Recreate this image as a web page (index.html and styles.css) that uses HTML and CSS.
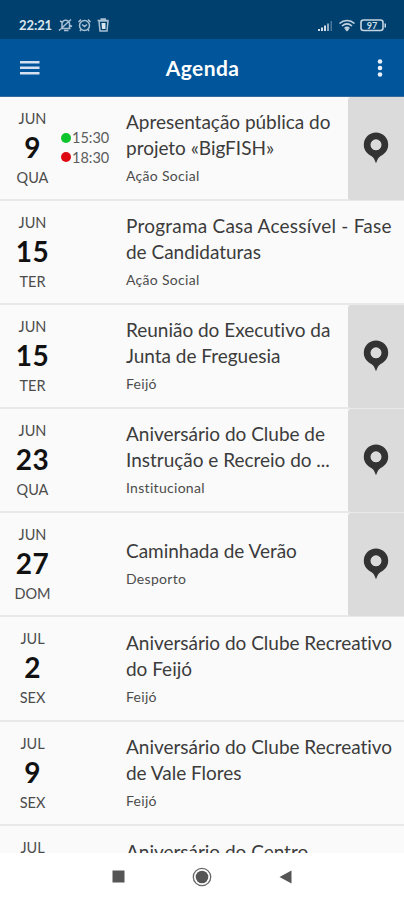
FILE: index.html
```html
<!DOCTYPE html>
<html lang="pt">
<head>
    <meta charset="UTF-8">
    <meta name="viewport" content="width=device-width, initial-scale=1.0">
    <title>Agenda</title>
    <link rel="stylesheet" href="styles.css">
</head>
<body>
    <svg class="sprite" width="0" height="0">
        <symbol id="pin" viewBox="0 0 26 32">
            <path fill-rule="evenodd" d="M13 0.5a12.2 12.2 0 0 0-12.2 12.2c0 6 3.800 9.500 8.200 11.700 1.600.9 2.500 3.100 4 6.800 1.500-3.700 2.400-5.900 4-6.800 4.400-2.200 8.200-5.700 8.200-11.700A12.200 12.200 0 0 0 13 .5zM13 7.300a5.500 5.500 0 1 1 0 11 5.500 5.500 0 0 1 0-11z"/>
        </symbol>
    </svg>

    <div class="status-bar">
        <span class="clock">22:21</span>
        <svg class="status-left" width="54" height="16" viewBox="0 0 54 16">
            <g fill="none" stroke="#a9c0d3" stroke-width="1.5">
                <path d="M2.500 11.500h10M4 11V7.500a3.500 3.500 0 0 1 7.500-1V11M6 13.500h4.500M1 13.500L13 2.500M2 4l2 1M12 8.500l2 1"/>
                <circle cx="26.500" cy="8.500" r="5"/>
                <path d="M20.500 5l2.500-2.500M32.500 5L30 2.500M24 7.500l2.500 2 2.500-2M23 12.500L22 14M30 12.500l1 1.500"/>
                <path d="M39.500 3.500h11M42.500 2h5.500M41 4l1 10h7l1-10z"/>
            </g>
            <path d="M43.500 6h4v6h-3.500z" fill="#dce6ee"/>
        </svg>
        <svg class="status-right" width="72" height="16" viewBox="0 0 72 16">
            <path d="M3 12h2v2H3zM6 10.500h2V14H6zM9 8.500h2V14H9z" fill="#d3dfe9"/>
            <path d="M12 6.500h2V14h-2z" fill="#8fabc1"/>
            <path d="M15.500 4H17v10h-1.500z" fill="#4b789b"/>
            <g fill="none" stroke="#c5d5e2" stroke-width="1.600">
                <path d="M24.500 6.500c4.500-4 10.500-4 15 0M27 9c3-2.600 7-2.600 10 0M29.500 11.500c1.500-1.300 3.500-1.300 5 0"/>
                <rect x="46" y="3" width="22" height="10.500" rx="2.500"/>
            </g>
            <path d="M32 10.500l2 2-2 2-2-2zM69.500 6.500H71v4h-1.500z" fill="#c5d5e2"/>
            <text class="battery" x="57" y="11.500" text-anchor="middle">97</text>
        </svg>
    </div>

    <header class="toolbar">
        <svg width="20" height="16" viewBox="0 0 20 16">
            <path d="M0 1h19.500v2.500H0zM0 6.500h19.500V9H0zM0 12h19.500v2.500H0z" fill="#d5e1f0"/>
        </svg>
        <h1>Agenda</h1>
        <svg width="6" height="18" viewBox="0 0 6 18">
            <g fill="#e9f0f8">
                <circle cx="3" cy="2.500" r="2.300"/>
                <circle cx="3" cy="9" r="2.300"/>
                <circle cx="3" cy="15.500" r="2.300"/>
            </g>
        </svg>
    </header>

    <main class="events">
        <article class="event">
            <div class="date"><span>JUN</span><b>9</b><span>QUA</span></div>
            <div class="hours">
                <span class="start">15:30</span>
                <span class="end">18:30</span>
            </div>
            <div class="info">
                <h2>Apresentação pública do<br>projeto «BigFISH»</h2>
                <p>Ação Social</p>
            </div>
            <div class="place"><svg><use href="#pin"/></svg></div>
        </article>
        <article class="event">
            <div class="date"><span>JUN</span><b>15</b><span>TER</span></div>
            <div class="hours"></div>
            <div class="info">
                <h2><span class="loose">Programa Casa Acessível - Fase</span><br>de Candidaturas</h2>
                <p>Ação Social</p>
            </div>
        </article>
        <article class="event">
            <div class="date"><span>JUN</span><b>15</b><span>TER</span></div>
            <div class="hours"></div>
            <div class="info">
                <h2>Reunião do Executivo da<br>Junta de Freguesia</h2>
                <p>Feijó</p>
            </div>
            <div class="place"><svg><use href="#pin"/></svg></div>
        </article>
        <article class="event">
            <div class="date"><span>JUN</span><b>23</b><span>QUA</span></div>
            <div class="hours"></div>
            <div class="info">
                <h2>Aniversário do Clube de<br>Instrução e Recreio do ...</h2>
                <p>Institucional</p>
            </div>
            <div class="place"><svg><use href="#pin"/></svg></div>
        </article>
        <article class="event">
            <div class="date"><span>JUN</span><b>27</b><span>DOM</span></div>
            <div class="hours"></div>
            <div class="info">
                <h2>Caminhada de Verão</h2>
                <p>Desporto</p>
            </div>
            <div class="place"><svg><use href="#pin"/></svg></div>
        </article>
        <article class="event">
            <div class="date"><span>JUL</span><b>2</b><span>SEX</span></div>
            <div class="hours"></div>
            <div class="info">
                <h2>Aniversário do Clube Recreativo<br>do Feijó</h2>
                <p>Feijó</p>
            </div>
        </article>
        <article class="event">
            <div class="date"><span>JUL</span><b>9</b><span>SEX</span></div>
            <div class="hours"></div>
            <div class="info">
                <h2>Aniversário do Clube Recreativo<br>de Vale Flores</h2>
                <p>Feijó</p>
            </div>
        </article>
        <article class="event">
            <div class="date"><span>JUL</span></div>
            <div class="hours"></div>
            <div class="info">
                <h2>Aniversário do Centro</h2>
            </div>
        </article>
    </main>

    <nav class="nav-bar">
        <svg width="13" height="13" viewBox="0 0 13 13"><path d="M.5.500h12v12H.5z" fill="#555"/></svg>
        <svg width="20" height="20" viewBox="0 0 20 20">
            <circle cx="10" cy="10" r="8.700" fill="none" stroke="#666" stroke-width="1.300"/>
            <circle cx="10" cy="10" r="6.300" fill="#555"/>
        </svg>
        <svg width="13" height="14" viewBox="0 0 13 14"><path d="M12.500.500v13L.5 7z" fill="#555"/></svg>
    </nav>
</body>
</html>
```
FILE: styles.css
```css
* {
    box-sizing: border-box;
    margin: 0;
    padding: 0;
}

body {
    height: 900px;
    display: flex;
    flex-direction: column;
    overflow: hidden;
    background: #fff;
    color: #3c3c3c;
    font-family: Lato, "Noto Sans", sans-serif;
    font-variant-ligatures: none;
}

.sprite {
    display: block;
}

.status-bar {
    flex: none;
    display: flex;
    align-items: center;
    height: 39px;
    padding: 10px 17px 0 19px;
    background: #00406f;
}

.clock {
    width: 39px;
    color: #dce7ef;
    font-size: 13px;
    font-weight: 700;
    line-height: 16px;
    letter-spacing: -0.1px;
}

.status-left {
    margin-right: auto;
}

.battery {
    fill: #d3e0ea;
    font-size: 9px;
    font-weight: 700;
}

.toolbar {
    flex: none;
    display: flex;
    align-items: center;
    justify-content: space-between;
    height: 58px;
    padding: 0 21px 0 20px;
    background: #00559b;
    border-bottom: 1px solid #37699a;
}

.toolbar h1 {
    margin: -1px 0 0 -12px;
    color: #fff;
    font-size: 21px;
    font-weight: 700;
    letter-spacing: 0.4px;
}

.events {
    flex: 1;
    min-height: 0;
    overflow: hidden;
}

.event {
    display: flex;
    height: 104.1px;
    background: #fafafa;
    border-bottom: 2px solid #e9e9e9;
}

.date {
    width: 65px;
    padding-top: 12px;
    display: flex;
    flex-direction: column;
    align-items: center;
    font-size: 14.500px;
    line-height: 20px;
    color: #4c4c4c;
}

.date b {
    margin-bottom: 2px;
    font-size: 28px;
    line-height: 37px;
    letter-spacing: 0.5px;
    color: #111;
}

.hours {
    width: 61px;
    padding-top: 31px;
    display: flex;
    flex-direction: column;
    font-size: 14.500px;
    line-height: 19.500px;
    color: #5c5c5c;
}

.hours span {
    display: flex;
    align-items: center;
    margin-left: -4px;
    gap: 1px;
}

.hours span::before {
    content: "";
    width: 10px;
    height: 10px;
    border-radius: 50%;
}

.hours .start::before {
    background: #0dc42c;
}

.hours .end::before {
    background: #de0a12;
}

.info {
    flex: 1;
    display: flex;
    flex-direction: column;
    justify-content: center;
    white-space: nowrap;
}

.info h2 {
    font-size: 19px;
    font-weight: 400;
    line-height: 26px;
    letter-spacing: -0.02px;
}

.info h2 .loose {
    letter-spacing: 0.22px;
}

.info p {
    padding-top: 4px;
    font-size: 14px;
    line-height: 22px;
    letter-spacing: 0.3px;
    color: #4c4c4c;
}

.place {
    width: 56px;
    margin-bottom: -1px;
    padding-bottom: 2px;
    display: flex;
    align-items: center;
    justify-content: center;
    background: #dbdbdb;
    border-radius: 3px 0 0 3px;
}

.place svg {
    width: 26px;
    height: 32px;
    fill: #333;
}

.event:last-child .info {
    justify-content: flex-start;
    padding-top: 13px;
}

.nav-bar {
    flex: none;
    display: flex;
    align-items: center;
    justify-content: center;
    gap: 67px;
    height: 47px;
    background: #fff;
}
```
